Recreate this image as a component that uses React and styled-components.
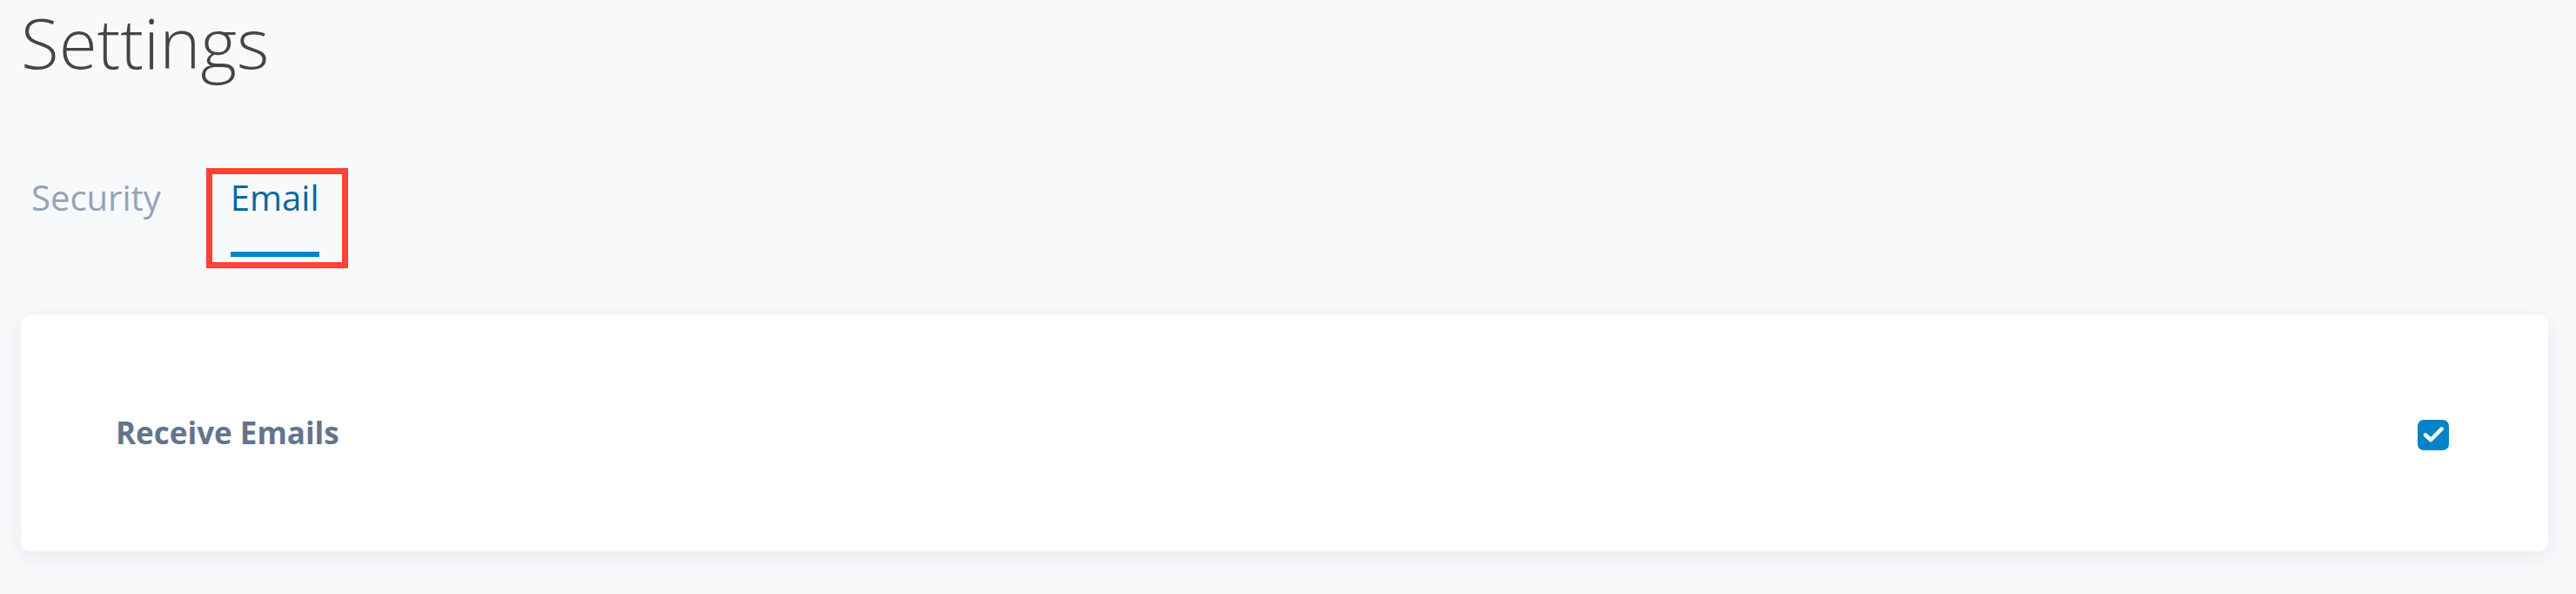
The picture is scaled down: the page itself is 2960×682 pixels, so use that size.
import { useState } from "react";
import styled, { createGlobalStyle } from "styled-components";

const GlobalStyle = createGlobalStyle`
  html, body {
    margin: 0;
    padding: 0;
    background: #f8f9fb;
    font-family: "Open Sans", "Noto Sans", sans-serif;
  }
`;

const Page = styled.div`
  padding: 0 32px 0 24px;
  min-height: 682px;
  box-sizing: border-box;
`;

const Title = styled.h1`
  margin: 0;
  font-size: 80px;
  line-height: 96px;
  font-weight: 350;
  color: #454545;
`;

const TabList = styled.div`
  display: flex;
  gap: 33px;
  margin: 104px 0 0 -9px;
`;

const Tab = styled.button`
  display: flex;
  flex-direction: column;
  align-items: stretch;
  padding: 0 26px 6px 21px;
  border: none;
  background: none;
  font-family: inherit;
  font-size: 40px;
  line-height: 54px;
  cursor: pointer;
  color: ${({ $active }) => ($active ? "#0a67a0" : "#94a3b8")};
  outline: ${({ $active }) => ($active ? "7px solid #ff4136" : "none")};
`;

const Underline = styled.span`
  display: block;
  height: 6px;
  margin-top: 35px;
  background: ${({ $active }) => ($active ? "#0284c7" : "transparent")};
`;

const Card = styled.div`
  margin-top: 60px;
  background: #fff;
  border-radius: 12px;
  box-shadow: 0 6px 22px rgba(30, 41, 59, 0.07);
  padding: 111px 114px 112px 109px;
  display: flex;
  align-items: center;
  justify-content: space-between;
`;

const Label = styled.span`
  font-size: 35px;
  line-height: 49px;
  font-weight: 700;
  color: #64748b;
`;

const CheckBox = styled.button`
  width: 36px;
  height: 35px;
  margin-top: 6px;
  padding: 0;
  border: none;
  border-radius: 7px;
  background: ${({ $checked }) => ($checked ? "#0284c7" : "#fff")};
  display: flex;
  align-items: center;
  justify-content: center;
  cursor: pointer;
`;

function App() {
  const [tab, setTab] = useState("email");
  const [receive, setReceive] = useState(true);

  return (
    <Page>
      <GlobalStyle />
      <Title>Settings</Title>
      <TabList>
        <Tab $active={tab === "security"} onClick={() => setTab("security")}>
          Security
          <Underline $active={tab === "security"} />
        </Tab>
        <Tab $active={tab === "email"} onClick={() => setTab("email")}>
          Email
          <Underline $active={tab === "email"} />
        </Tab>
      </TabList>
      <Card>
        <Label>Receive Emails</Label>
        <CheckBox $checked={receive} onClick={() => setReceive(!receive)}>
          {receive && (
            <svg width="36" height="35" viewBox="0 0 36 35">
              <path
                d="M9 17.5 L15.2 23 L27.5 10.5"
                fill="none"
                stroke="#fff"
                strokeWidth="4.6"
                strokeLinecap="round"
                strokeLinejoin="round"
              />
            </svg>
          )}
        </CheckBox>
      </Card>
    </Page>
  );
}

export default App;
